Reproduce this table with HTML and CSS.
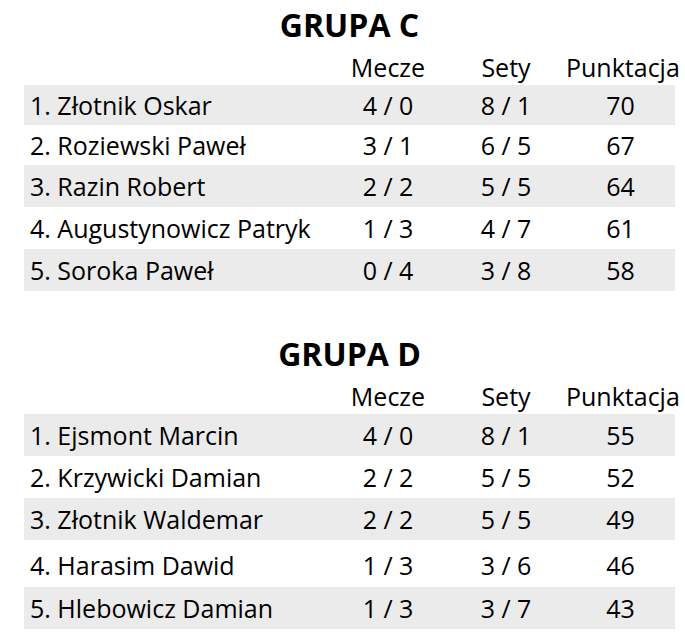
FILE: index.html
```html
<!DOCTYPE html>
<html lang="pl">
<head>
<meta charset="utf-8">
<title>Grupy</title>
<link rel="stylesheet" href="styles.css">
</head>
<body>
<div class="page">
  <section class="group">
    <h2 class="group-title">GRUPA C</h2>
    <div class="row head">
      <div class="name"></div>
      <div class="cell">Mecze</div>
      <div class="cell">Sety</div>
      <div class="cell pts">Punktacja</div>
    </div>
    <div class="row odd short"><div class="name">1. Złotnik Oskar</div><div class="cell">4 / 0</div><div class="cell">8 / 1</div><div class="cell pts">70</div></div>
    <div class="row short"><div class="name">2. Roziewski Paweł</div><div class="cell">3 / 1</div><div class="cell">6 / 5</div><div class="cell pts">67</div></div>
    <div class="row odd"><div class="name">3. Razin Robert</div><div class="cell">2 / 2</div><div class="cell">5 / 5</div><div class="cell pts">64</div></div>
    <div class="row"><div class="name">4. Augustynowicz Patryk</div><div class="cell">1 / 3</div><div class="cell">4 / 7</div><div class="cell pts">61</div></div>
    <div class="row odd"><div class="name">5. Soroka Paweł</div><div class="cell">0 / 4</div><div class="cell">3 / 8</div><div class="cell pts">58</div></div>
  </section>

  <section class="group">
    <h2 class="group-title">GRUPA D</h2>
    <div class="row head">
      <div class="name"></div>
      <div class="cell">Mecze</div>
      <div class="cell">Sety</div>
      <div class="cell pts">Punktacja</div>
    </div>
    <div class="row odd"><div class="name">1. Ejsmont Marcin</div><div class="cell">4 / 0</div><div class="cell">8 / 1</div><div class="cell pts">55</div></div>
    <div class="row"><div class="name">2. Krzywicki Damian</div><div class="cell">2 / 2</div><div class="cell">5 / 5</div><div class="cell pts">52</div></div>
    <div class="row odd"><div class="name">3. Złotnik Waldemar</div><div class="cell">2 / 2</div><div class="cell">5 / 5</div><div class="cell pts">49</div></div>
    <div class="row tall"><div class="name">4. Harasim Dawid</div><div class="cell">1 / 3</div><div class="cell">3 / 6</div><div class="cell pts">46</div></div>
    <div class="row odd"><div class="name">5. Hlebowicz Damian</div><div class="cell">1 / 3</div><div class="cell">3 / 7</div><div class="cell pts">43</div></div>
  </section>
</div>
</body>
</html>
```

FILE: styles.css
```css
html, body {
  margin: 0;
  padding: 0;
  background: #ffffff;
}

body {
  font-family: "Open Sans", "Noto Sans", sans-serif;
  color: #000000;
}

.page {
  padding-left: 24px;
  width: 651px;
  display: flex;
  flex-direction: column;
  gap: 38px;
}

.group {
  display: flex;
  flex-direction: column;
}

.group-title {
  margin: 3px 0 0 0;
  height: 43px;
  line-height: 43px;
  font-size: 32px;
  font-weight: 700;
  text-align: center;
}

.row {
  display: grid;
  grid-template-columns: 305px 118px 118px 110px;
  align-items: center;
  height: 42px;
  font-size: 25px;
  line-height: 32px;
}

.row.short {
  height: 40px;
}

.row.tall {
  height: 47px;
  padding-top: 3px;
  box-sizing: border-box;
}

.row.head {
  height: 39px;
  align-items: end;
  padding-bottom: 2px;
  box-sizing: border-box;
}

.row.odd {
  background: #ebebeb;
}

.name {
  padding-left: 6px;
  white-space: nowrap;
}

.cell {
  text-align: center;
  white-space: nowrap;
}

.cell.pts {
  padding-left: 1px;
}
```
